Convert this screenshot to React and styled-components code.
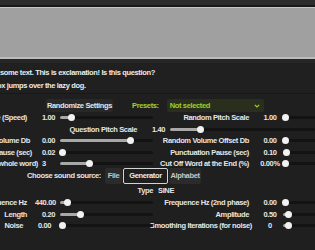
import styled, { createGlobalStyle } from 'styled-components'

const GlobalStyle = createGlobalStyle`
  html, body { margin: 0; padding: 0; background: #1f1f1f; overflow: hidden; }
  body {
    font-family: "Liberation Sans", Arial, sans-serif;
    font-weight: 700;
    font-size: 7.5px;
    letter-spacing: -0.36px;
    color: #e6e6e6;
  }
`

const Page = styled.div`
  width: 315px;
  height: 250px;
  display: flex;
  flex-direction: column;
  background: #1f1f1f;
  overflow: hidden;
`

const TopBar = styled.div`
  height: 5px;
  background: #2c2c2c;
  border-bottom: 2px solid #191919;
`

const Preview = styled.div`
  height: 49px;
  background: #a0a0a0;
  border-top: 1px solid #c6c6c6;
  border-bottom: 2px solid #bcbcbc;
`

const PreviewShade = styled.div`
  height: 4px;
  background: #262626;
`

const TextArea = styled.div`
  height: 27px;
  padding-top: 3px;
  background: #202020;
  white-space: nowrap;
`

const TextLine = styled.div`
  line-height: 13px;
  margin-left: ${p => p.$shift}px;
  color: #ececec;
`

const Panel = styled.div`
  flex: 1;
  display: flex;
  flex-direction: column;
  padding-top: 5px;
  border-top: 1px solid #181818;
  white-space: nowrap;
`

const ActionRow = styled.div`
  display: flex;
  align-items: center;
  height: 13px;
`

const Button = styled.div`
  margin-left: 46px;
  width: 67px;
  height: 13px;
  line-height: 13px;
  text-align: center;
  background: #282828;
  border-radius: 2px;
`

const PresetLabel = styled.span`
  margin-left: 19px;
  color: #9fd32a;
`

const Select = styled.div`
  margin-left: 8px;
  width: 97px;
  height: 13px;
  box-sizing: border-box;
  padding: 0 4px 0 3px;
  display: flex;
  align-items: center;
  justify-content: space-between;
  background: #2a2f1d;
  border-radius: 2px;
  color: #9fd02a;
`

const Row = styled.div`
  display: flex;
  align-items: center;
  height: ${p => p.$h || 11.5}px;
  margin-top: ${p => p.$lift ? -p.$lift : 0}px;
`

const LeftLabel = styled.div`
  flex: none;
  width: ${p => p.$w || 40}px;
  box-sizing: border-box;
  padding-right: ${p => p.$pad || 0}px;
  display: flex;
  justify-content: flex-end;
`

const Value = styled.div`
  flex: none;
  width: ${p => p.$w || 20}px;
  text-indent: ${p => p.$indent ?? 2}px;
`

const RightLabel = styled.div`
  flex: none;
  width: 105px;
  box-sizing: border-box;
  padding-right: ${p => p.$pad ?? 9}px;
  display: flex;
  justify-content: flex-end;
`

const RightValue = styled.div`
  flex: none;
  width: 24px;
  text-align: center;
`

const Track = styled.div`
  position: relative;
  flex: ${p => p.$w ? 'none' : 1};
  width: ${p => p.$w ? `${p.$w}px` : 'auto'};
  margin-left: ${p => p.$gap || 0}px;
  height: 3px;
  border-radius: 2px;
  background: #131313;
`

const Fill = styled.div`
  position: absolute;
  left: 0;
  top: 0;
  bottom: 0;
  border-radius: 2px;
  background: #a8a8a8;
`

const Grabber = styled.div`
  position: absolute;
  top: 50%;
  width: 7px;
  height: 7px;
  margin: -3.5px 0 0 -3.5px;
  border-radius: 50%;
  background: #f2f2f2;
`

const Tabs = styled.div`
  display: flex;
  margin-left: 4px;
  height: 16px;
`

const Tab = styled.div`
  box-sizing: border-box;
  width: ${p => p.$w}px;
  height: 16px;
  line-height: ${p => p.$active ? 14 : 16}px;
  text-align: center;
  background: ${p => p.$active ? '#1f1f1f' : '#2b2b2b'};
  border: ${p => p.$active ? '1px solid #d4d4d4' : 'none'};
  border-radius: 2px;
  color: ${p => p.$active ? '#ececec' : '#c8c8c8'};
  margin-right: 1px;
`

const TypeValue = styled.span`
  margin-left: 5px;
`

const Slider = ({ frac, w, gap }) => {
  const pos = `calc(2.5px + ${frac} * (100% - 5px))`
  return (
    <Track $w={w} $gap={gap}>
      <Fill style={{ width: pos }} />
      <Grabber style={{ left: pos }} />
    </Track>
  )
}

const Chevron = () => (
  <svg width="6" height="4" viewBox="0 0 6 4">
    <path d="M0.8 0.8 L3 3 L5.2 0.8" fill="none" stroke="#9fd02a" strokeWidth="1.1" />
  </svg>
)

const topRows = [
  { l: 'Pitch Scale (Speed)', end: 27, v: '1.00', f: 0.1, r: 'Random Pitch Scale', rv: '1.00', rf: 0 },
  null,
  { l: 'Volume Db', end: 30, v: '0.00', f: 0.77, r: 'Random Volume Offset Db', rv: '0.00', rf: 0 },
  { l: 'Pause (sec)', end: 32, v: '0.02', f: 0, r: 'Punctuation Pause (sec)', rv: '0.10', rf: 0.01 },
  { l: 'Cut Off Word at the Start (whole word)', end: 38, v: '3', f: 0.31, r: 'Cut Off Word at the End (%)', rv: '0.00%', rf: 0 },
]

const bottomRows = [
  { l: 'Frequence Hz', end: 27, v: '440.00', ind: -5, f: 0.06, r: 'Frequence Hz (2nd phase)', rv: '0.00', rf: 0 },
  { l: 'Length', end: 27, v: '0.20', ind: 2, f: 0.2, r: 'Amplitude', rv: '0.50', rf: 0.03 },
  { l: 'Noise', end: 23, v: '0.00', ind: -2, f: 0, r: 'Smoothing Iterations (for noise)', rv: '0', rf: 0.03, rpad: 6 },
]

const ControlRow = ({ row }) => (
  <Row>
    <LeftLabel $pad={40 - row.end}><span>{row.l}</span></LeftLabel>
    <Value $indent={row.ind}>{row.v}</Value>
    <Slider frac={row.f} w={93} />
    <RightLabel $pad={row.rpad}><span>{row.r}</span></RightLabel>
    <RightValue>{row.rv}</RightValue>
    <Slider frac={row.rf} w={93} gap={1} />
  </Row>
)

export default function App() {
  return (
    <>
      <GlobalStyle />
      <Page>
        <TopBar />
        <Preview />
        <PreviewShade />
        <TextArea>
          <TextLine $shift={-23}>This is some text. This is exclamation! Is this question?</TextLine>
          <TextLine $shift={-61}>The quick brown fox jumps over the lazy dog.</TextLine>
        </TextArea>
        <Panel>
          <ActionRow>
            <Button>Randomize Settings</Button>
            <PresetLabel>Presets:</PresetLabel>
            <Select>
              <span>Not selected</span>
              <Chevron />
            </Select>
          </ActionRow>

          {topRows.map((row, i) =>
            row ? (
              <ControlRow key={i} row={row} />
            ) : (
              <Row key={i}>
                <LeftLabel $w={138} $pad={1}><span>Question Pitch Scale</span></LeftLabel>
                <Value $w={32} $indent={14}>1.40</Value>
                <Slider frac={0.2} />
              </Row>
            )
          )}

          <Row $h={16} $lift={2}>
            <LeftLabel $w={101}><span>Choose sound source:</span></LeftLabel>
            <Tabs>
              <Tab $w={17}>File</Tab>
              <Tab $w={45} $active>Generator</Tab>
              <Tab $w={32}>Alphabet</Tab>
            </Tabs>
          </Row>

          <Row $h={13.5}>
            <LeftLabel $w={153}><span>Type</span></LeftLabel>
            <TypeValue>SINE</TypeValue>
          </Row>

          {bottomRows.map((row, i) => (
            <ControlRow key={i} row={row} />
          ))}
        </Panel>
      </Page>
    </>
  )
}
